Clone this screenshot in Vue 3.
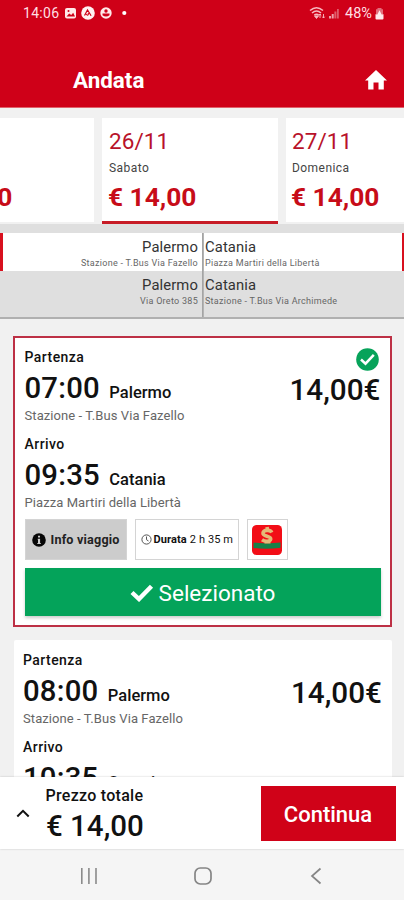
<script setup>
const days = [
  { id: 'prev', date: '', name: '', price: '€ 14,00' },
  { id: 'sat', date: '26/11', name: 'Sabato', price: '€ 14,00', active: true },
  { id: 'sun', date: '27/11', name: 'Domenica', price: '€ 14,00' },
]

const routes = [
  { from: 'Palermo', fromStop: 'Stazione - T.Bus Via Fazello', to: 'Catania', toStop: 'Piazza Martiri della Libertà', active: true },
  { from: 'Palermo', fromStop: 'Via Oreto 385', to: 'Catania', toStop: 'Stazione - T.Bus Via Archimede' },
]

const trips = [
  {
    selected: true,
    price: '14,00€',
    legs: [
      { label: 'Partenza', time: '07:00', city: 'Palermo', stop: 'Stazione - T.Bus Via Fazello' },
      { label: 'Arrivo', time: '09:35', city: 'Catania', stop: 'Piazza Martiri della Libertà' },
    ],
  },
  {
    selected: false,
    price: '14,00€',
    legs: [
      { label: 'Partenza', time: '08:00', city: 'Palermo', stop: 'Stazione - T.Bus Via Fazello' },
      { label: 'Arrivo', time: '10:35', city: 'Catania' },
    ],
  },
]
</script>

<template>
  <div class="screen">
    <header class="header">
      <div class="status">
        <span class="clock">14:06</span>
        <svg class="s-left" width="66" height="14" viewBox="0 0 66 14">
          <rect x="1" y="2" width="11" height="10.500" rx="2" fill="#ffe9e9" />
          <path d="M2.500 10.500l2.700-3 2 1.600 2-2.400 1.800 3.800z" fill="#cf0018" />
          <circle cx="4.500" cy="5" r="1" fill="#cf0018" />
          <circle cx="24" cy="7" r="6.800" fill="#fff1f1" />
          <path d="M20.500 9.500l3-5.500 3.600 5.800M22 8c1.500 2 2.200 1.500 2.500-.8" fill="none" stroke="#cf0018" stroke-width="1.200" />
          <circle cx="42" cy="7" r="5.700" fill="#ffe9e9" />
          <circle cx="42" cy="5" r="1.700" fill="#cf0018" />
          <path d="M38.500 7.500h7v1.700q-3.500 2.500-7 0z" fill="#cf0018" />
          <circle cx="60.300" cy="7" r="2.100" fill="#fff" />
        </svg>
        <span class="grow"></span>
        <svg class="s-net" width="32" height="14" viewBox="0 0 32 14">
          <g fill="none" stroke="#f7b9c0" stroke-width="1.500">
            <path d="M1 4.500q6.500-5.500 13 0" />
            <path d="M3 7q4.500-4 9 0" />
            <path d="M5.300 9.200q2.200-1.800 4.400 0" />
          </g>
          <path d="M7.500 12.500l-2-2.600h4zM11 12V8M9.800 9.200L11 8l1.200 1.200M14.500 8v4M13.300 10.800l1.200 1.200 1.200-1.200" fill="#f7b9c0" stroke="#f7b9c0" stroke-width=".9" />
          <path d="M20 10h2v2.500h-2zM22.700 8h2v4.500h-2z" fill="#eda0a9" />
          <path d="M25.400 5.500h2v7h-2zM28 3h1.800v9.500H28z" fill="#df5c6b" />
        </svg>
        <span class="battery">48%</span>
        <svg width="9" height="13" viewBox="0 0 9 13">
          <path d="M2.500 1h4v1.200h1.500V7H1V2.200h1.500z" fill="#e36d7b" />
          <path d="M4.500 3.200l2 4h2v4.300q0 1-1 1h-6q-1 0-1-1V7.200h2z" fill="#ffeaec" />
        </svg>
      </div>
      <div class="title-row">
        <h1>Andata</h1>
        <svg width="22" height="20" viewBox="0 0 22 20">
          <path d="M11 0L0 10.400h3.200V19.500h5.300v-7h5v7h5.300v-9.100H22z" fill="#fff" />
        </svg>
      </div>
    </header>

    <div class="days">
      <div v-for="d in days" :key="d.id" class="day" :class="{ active: d.active }">
        <div class="day-date">{{ d.date }}</div>
        <div class="day-name">{{ d.name }}</div>
        <div class="day-price">{{ d.price }}</div>
      </div>
    </div>

    <div class="routes">
      <div v-for="(r, i) in routes" :key="i" class="route" :class="{ active: r.active }">
        <div class="end from">
          <div class="city">{{ r.from }}</div>
          <div class="stop">{{ r.fromStop }}</div>
        </div>
        <div class="end to">
          <div class="city">{{ r.to }}</div>
          <div class="stop">{{ r.toStop }}</div>
        </div>
      </div>
    </div>

    <main class="trips">
      <article v-for="(t, i) in trips" :key="i" class="trip" :class="{ selected: t.selected }">
        <div class="trip-top">
          <div class="legs">
            <div v-for="l in t.legs" :key="l.label" class="leg">
              <div class="leg-label">{{ l.label }}</div>
              <div class="leg-time"><span class="time">{{ l.time }}</span><span class="place">{{ l.city }}</span></div>
              <div v-if="l.stop" class="leg-stop">{{ l.stop }}</div>
            </div>
          </div>
          <div class="price-col">
            <svg v-if="t.selected" class="ok" width="23" height="23" viewBox="0 0 23 23">
              <circle cx="11.500" cy="11.500" r="11.300" fill="#07a35a" />
              <path d="M5 11.500l4.500 4.200 8.300-8.900" fill="none" stroke="#fff" stroke-width="2.500" />
            </svg>
            <div class="trip-price">{{ t.price }}</div>
          </div>
        </div>
        <template v-if="t.selected">
          <div class="tags">
            <div class="tag info">
              <svg width="14" height="14" viewBox="0 0 14 14">
                <circle cx="7" cy="7" r="6.800" fill="#060606" />
                <path d="M6 2.800h2v1.700H6zM5.700 5.700h2.400v4.200h.7v1H5.300v-1H6V6.800h-.3z" fill="#ccc" />
              </svg>
              <span>Info viaggio</span>
            </div>
            <div class="tag duration">
              <svg width="11" height="11" viewBox="0 0 11 11">
                <circle cx="5.500" cy="5.500" r="4.600" fill="none" stroke="#555" />
                <path d="M5.500 2.500v3.200l2 1.300" fill="none" stroke="#555" />
              </svg>
              <span><b>Durata</b> 2 h 35 m</span>
            </div>
            <div class="tag logo">
              <svg width="30" height="30" viewBox="0 0 30 30">
                <rect width="30" height="30" rx="4.500" fill="#f20d16" />
                <path d="M1.500 17.500q6 1 13.500.8t13.500-.8v5.300q-13.500 1.800-27 .2z" fill="#168148" />
                <path d="M19.800 7.500c-1.500-3-8.300-2.800-8.800.5-.5 4 8.200 2.600 7.700 6.200-.6 2.800-5.800 2.600-8.700.6" fill="none" stroke="#e5b978" stroke-width="3.600" />
                <path d="M13.500 3.500l3.500-.6M12.500 17.300h6" stroke="#e5b978" stroke-width="2.400" />
              </svg>
            </div>
          </div>
          <button class="select">
            <svg width="24" height="18" viewBox="0 0 24 18">
              <path d="M2 8.500l7 6.500L21.500 2.200" fill="none" stroke="#fff" stroke-width="4.400" />
            </svg>
            <span>Selezionato</span>
          </button>
        </template>
      </article>
    </main>

    <footer class="total">
      <svg class="chev" width="14" height="9" viewBox="0 0 14 9">
        <path d="M1.300 7.500L7 1.800l5.700 5.700" fill="none" stroke="#111" stroke-width="2" />
      </svg>
      <div class="sum">
        <div class="sum-label">Prezzo totale</div>
        <div class="sum-value">€ 14,00</div>
      </div>
      <button class="continue">Continua</button>
    </footer>

    <nav class="nav">
      <svg width="18" height="18" viewBox="0 0 18 18">
        <path d="M1.800 1v16M8.900 1v16M16 1v16" stroke="#8b8b8b" stroke-width="1.600" />
      </svg>
      <svg width="18" height="18" viewBox="0 0 18 18">
        <rect x="1" y="1" width="16" height="16" rx="5.300" fill="none" stroke="#858585" stroke-width="1.700" />
      </svg>
      <svg width="18" height="18" viewBox="0 0 18 18">
        <path d="M13.500 1.500L5 9l8.500 7.500" fill="none" stroke="#858585" stroke-width="1.700" />
      </svg>
    </nav>
  </div>
</template>

<style>
body {
  margin: 0;
}
</style>

<style scoped>
.screen {
  width: 404px;
  height: 900px;
  display: flex;
  flex-direction: column;
  overflow: hidden;
  background: #f1f1f1;
  font-family: Roboto, "Liberation Sans", sans-serif;
  color: #111;
  white-space: nowrap;
}
svg {
  display: block;
  flex: none;
}
.header {
  flex: none;
  height: 108px;
  box-sizing: border-box;
  background: #cf0018;
  border-bottom: 1px solid #e0636c;
}
.status {
  display: flex;
  align-items: center;
  height: 26px;
  padding: 0 20px 0 23px;
  color: #ffdfe2;
  font-size: 14px;
}
.clock {
  width: 41px;
  letter-spacing: 0.3px;
}
.grow {
  flex: 1;
}
.s-net {
  margin-right: 4px;
}
.battery {
  width: 30px;
  font-size: 14.500px;
}
.title-row {
  display: flex;
  justify-content: space-between;
  align-items: center;
  height: 27px;
  margin-top: 40px;
  padding: 0 17px 0 73px;
  color: #fff;
}
h1 {
  margin: 2px 0 0;
  font-size: 22.400px;
  line-height: 27px;
  font-weight: 700;
}
.days {
  flex: none;
  display: flex;
  gap: 8px;
  width: 538px;
  height: 116px;
  margin-left: -82px;
  padding-top: 10px;
  box-sizing: border-box;
}
.day {
  width: 176px;
  height: 104px;
  box-sizing: border-box;
  flex: none;
  padding: 10px 0 0 6px;
  background: #fff;
}
.day.active {
  height: 106px;
  padding-left: 7px;
  border-bottom: 3px solid #c71c26;
}
.day:first-child {
  padding-left: 7px;
}
.day-date {
  height: 27px;
  font-size: 22.500px;
  line-height: 27px;
  letter-spacing: 0.1px;
  color: #b8122a;
}
.day-name {
  height: 18px;
  margin: 4px 0 0;
  font-size: 12px;
  line-height: 18px;
  letter-spacing: 0.45px;
  color: #444;
}
.day-price {
  margin: 5px 0 0 -1px;
  font-size: 26.300px;
  line-height: 31px;
  font-weight: 700;
  color: #c70c18;
}
.routes {
  flex: none;
  height: 95px;
  box-sizing: border-box;
  padding-top: 9px;
  background: #dfdfdf;
  border-bottom: 2px solid #b0b0b0;
}
.route {
  display: flex;
  height: 38px;
  color: #333;
}
.route.active {
  background: #fff;
  box-shadow: inset 3px 0 #d8101e, inset -2px 0 #d8101e;
}
.end {
  box-sizing: border-box;
}
.from {
  width: 203px;
  padding-right: 4px;
  text-align: right;
  border-right: 1px solid #a4a4a4;
}
.to {
  width: 201px;
  padding-left: 1px;
  border-left: 1px solid #b4b4b4;
}
.route:last-child .end {
  height: 46px;
}
.city {
  padding-top: 4px;
  font-size: 14.800px;
  line-height: 20px;
  letter-spacing: 0.1px;
}
.stop {
  font-size: 9px;
  line-height: 12px;
  letter-spacing: 0.28px;
  color: #666;
}
.trips {
  flex: 1;
  min-height: 0;
  overflow: hidden;
  padding: 17px 12px 0 13px;
}
.trip {
  box-sizing: border-box;
  margin-left: 1px;
  padding: 11px 10px 0 9px;
  height: 140px;
  overflow: hidden;
  background: #fff;
  border-radius: 2px 2px 0 0;
}
.trip.selected {
  height: 291px;
  margin: 0 0 13px;
  padding: 10px 9.500px 0 9.500px;
  border: 2px solid #bd3045;
  border-radius: 0;
}
.trip-top {
  display: flex;
  justify-content: space-between;
}
.leg + .leg {
  margin-top: 10.500px;
}
.leg-label {
  font-size: 14px;
  line-height: 19px;
  font-weight: 500;
  letter-spacing: 0.45px;
}
.leg-time {
  display: flex;
  align-items: baseline;
  gap: 9.500px;
  margin: 5px 0 3px;
  height: 32px;
  line-height: 32px;
  font-weight: 500;
}
.time {
  font-size: 29.300px;
  letter-spacing: 0.2px;
}
.place {
  font-size: 16.500px;
}
.leg-stop {
  height: 17px;
  font-size: 13px;
  line-height: 18px;
  letter-spacing: 0.08px;
  color: #666;
}
.price-col {
  display: flex;
  flex-direction: column;
  align-items: flex-end;
}
.ok {
  margin: 0 1.500px 0 0;
}
.trip-price {
  margin-top: 25px;
  font-size: 29.700px;
  line-height: 34px;
  font-weight: 500;
}
.ok + .trip-price {
  margin-top: 2px;
}
.tags {
  display: flex;
  gap: 8px;
  margin-top: 8.500px;
  height: 41px;
}
.tag {
  display: flex;
  align-items: center;
  box-sizing: border-box;
  border: 1px solid #d4d4d4;
}
.info {
  width: 102px;
  padding-left: 6px;
  gap: 5px;
  background: #ccc;
  font-size: 12.600px;
  letter-spacing: 0.2px;
  font-weight: 700;
  color: #222;
}
.duration {
  width: 104px;
  padding-left: 5px;
  gap: 2px;
  font-size: 11px;
  letter-spacing: 0.12px;
}
.logo {
  width: 41px;
  justify-content: center;
}
.select {
  display: flex;
  align-items: center;
  justify-content: center;
  gap: 5px;
  width: 356px;
  height: 48px;
  margin-top: 8px;
  padding: 2px 0 0;
  border: 0;
  background: #04a35a;
  box-shadow: 0 2px 3px rgba(0, 0, 0, 0.2);
  color: #fff;
  font-family: inherit;
  font-size: 22.500px;
  line-height: 30px;
}
.total {
  flex: none;
  display: flex;
  height: 72px;
  background: #fff;
  position: relative;
  box-shadow: 0 0 2px rgba(0, 0, 0, 0.2);
}
.chev {
  margin: 32px 0 0 16px;
}
.sum {
  width: 215px;
  margin-left: 15.500px;
  padding-top: 8px;
  font-weight: 500;
}
.sum-label {
  font-size: 16px;
  line-height: 21px;
  letter-spacing: 0.28px;
}
.sum-value {
  margin: 3px 0 0 0.500px;
  font-size: 29.500px;
  line-height: 34px;
}
.continue {
  width: 135px;
  height: 55px;
  margin-top: 9px;
  padding: 2px 0 0;
  border: 0;
  background: #d00218;
  color: #fff;
  font-family: inherit;
  font-size: 22px;
  font-weight: 500;
}
.nav {
  flex: none;
  display: flex;
  justify-content: space-between;
  height: 51px;
  padding: 18px 79px 0 80px;
  box-sizing: border-box;
  background: #f5f5f5;
}
</style>
